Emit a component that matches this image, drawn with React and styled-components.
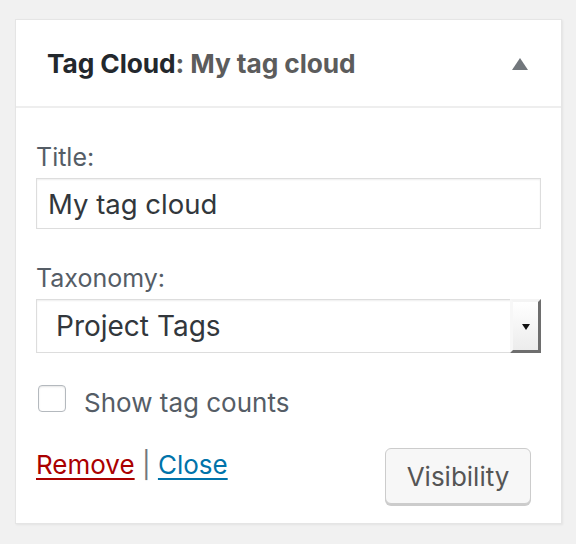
import React from 'react';
import styled, { createGlobalStyle } from 'styled-components';

const GlobalStyle = createGlobalStyle`
  body {
    margin: 0;
    background: #f1f1f1;
    font-family: Inter, "Liberation Sans", sans-serif;
  }
`;

const Page = styled.div`
  padding: 19px 14px 20px 15px;
`;

const Card = styled.div`
  width: 547px;
  height: 505px;
  box-sizing: border-box;
  background: #fff;
  border: 1px solid #e5e5e5;
  box-shadow: 1px 1px 2px rgba(0, 0, 0, 0.06);
  display: flex;
  flex-direction: column;
`;

const Header = styled.div`
  height: 86px;
  flex: none;
  display: flex;
  align-items: center;
  justify-content: space-between;
  padding: 0 33px 0 31px;
  border-bottom: 2px solid #eeeeee;
`;

const HeaderTitle = styled.h3`
  margin: 0;
  font-size: 26.3px;
  font-weight: 700;
  color: #23282d;
  letter-spacing: -0.1px;
`;

const InWidgetTitle = styled.span`
  color: #5c5c5c;
`;

const ToggleArrow = styled.span`
  width: 0;
  height: 0;
  border-left: 8px solid transparent;
  border-right: 8px solid transparent;
  border-bottom: 12px solid #72777c;
  margin-top: 1px;
`;

const Body = styled.div`
  padding: 35px 20px 0 20px;
  display: flex;
  flex-direction: column;
`;

const Field = styled.div`
  display: flex;
  flex-direction: column;
  margin-bottom: ${(p) => p.$space}px;
`;

const Label = styled.label`
  font-size: 25px;
  line-height: 28px;
  color: #555d66;
  margin-bottom: 7px;
`;

const TextInput = styled.input`
  box-sizing: border-box;
  height: 51px;
  width: 100%;
  padding: 0 11px;
  border: 1px solid #dddddd;
  box-shadow: inset 0 1px 2px rgba(0, 0, 0, 0.07);
  font-family: inherit;
  font-size: 27.5px;
  color: #32373c;
  outline: none;
`;

const SelectBox = styled.div`
  box-sizing: border-box;
  height: 54px;
  display: flex;
  border: 1px solid #dddddd;
  box-shadow: inset 0 1px 2px rgba(0, 0, 0, 0.07);
`;

const SelectValue = styled.span`
  flex: 1;
  display: flex;
  align-items: center;
  padding-left: 19px;
  font-size: 28px;
  color: #32373c;
`;

const SelectButton = styled.span`
  width: 25px;
  display: flex;
  align-items: center;
  justify-content: center;
  background: linear-gradient(#ffffff, #ececec);
  border-top: 3px solid #f4f4f4;
  border-left: 3px solid #f7f7f7;
  border-right: 3px solid #6e6e6e;
  border-bottom: 3px solid #6e6e6e;
  margin: -1px -1px -1px 0;

  &::after {
    content: '';
    border-left: 4px solid transparent;
    border-right: 4px solid transparent;
    border-top: 6px solid #111;
    margin-top: 2px;
  }
`;

const CheckRow = styled.label`
  display: flex;
  align-items: flex-start;
  gap: 18px;
  margin-left: 2px;
  font-size: 26px;
  line-height: 28px;
  color: #555d66;
`;

const CheckText = styled.span`
  margin-top: 6px;
`;

const Checkbox = styled.span`
  flex: none;
  box-sizing: border-box;
  width: 28px;
  height: 27px;
  margin-top: 2px;
  border: 1px solid #b4b9be;
  border-radius: 4px;
  box-shadow: inset 0 1px 2px rgba(0, 0, 0, 0.1);
  background: #fff;
`;

const Actions = styled.div`
  display: flex;
  justify-content: space-between;
  align-items: flex-start;
  margin-top: 31px;
  padding-right: 10px;
`;

const Links = styled.div`
  font-size: 26px;
  line-height: 28px;
  color: #72777c;
  margin-top: 3px;
`;

const ActionLink = styled.a`
  color: ${(p) => p.$color};
  text-decoration: underline;
  text-decoration-thickness: 2px;
  text-underline-offset: 4px;
`;

const Button = styled.button`
  box-sizing: border-box;
  width: 146px;
  height: 56px;
  background: #f7f7f7;
  border: 1px solid #cccccc;
  border-radius: 6px;
  box-shadow: 0 2px 0 #cccccc;
  font-family: inherit;
  font-size: 26px;
  color: #555555;
`;

export default function App() {
  return (
    <Page>
      <GlobalStyle />
      <Card>
        <Header>
          <HeaderTitle>
            Tag Cloud<InWidgetTitle>: My tag cloud</InWidgetTitle>
          </HeaderTitle>
          <ToggleArrow />
        </Header>
        <Body>
          <Field $space={35}>
            <Label>Title:</Label>
            <TextInput defaultValue="My tag cloud" />
          </Field>
          <Field $space={30}>
            <Label>Taxonomy:</Label>
            <SelectBox>
              <SelectValue>Project Tags</SelectValue>
              <SelectButton />
            </SelectBox>
          </Field>
          <CheckRow>
            <Checkbox />
            <CheckText>Show tag counts</CheckText>
          </CheckRow>
          <Actions>
            <Links>
              <ActionLink href="#" $color="#a00">Remove</ActionLink>
              {' | '}
              <ActionLink href="#" $color="#0073aa">Close</ActionLink>
            </Links>
            <Button>Visibility</Button>
          </Actions>
        </Body>
      </Card>
    </Page>
  );
}
